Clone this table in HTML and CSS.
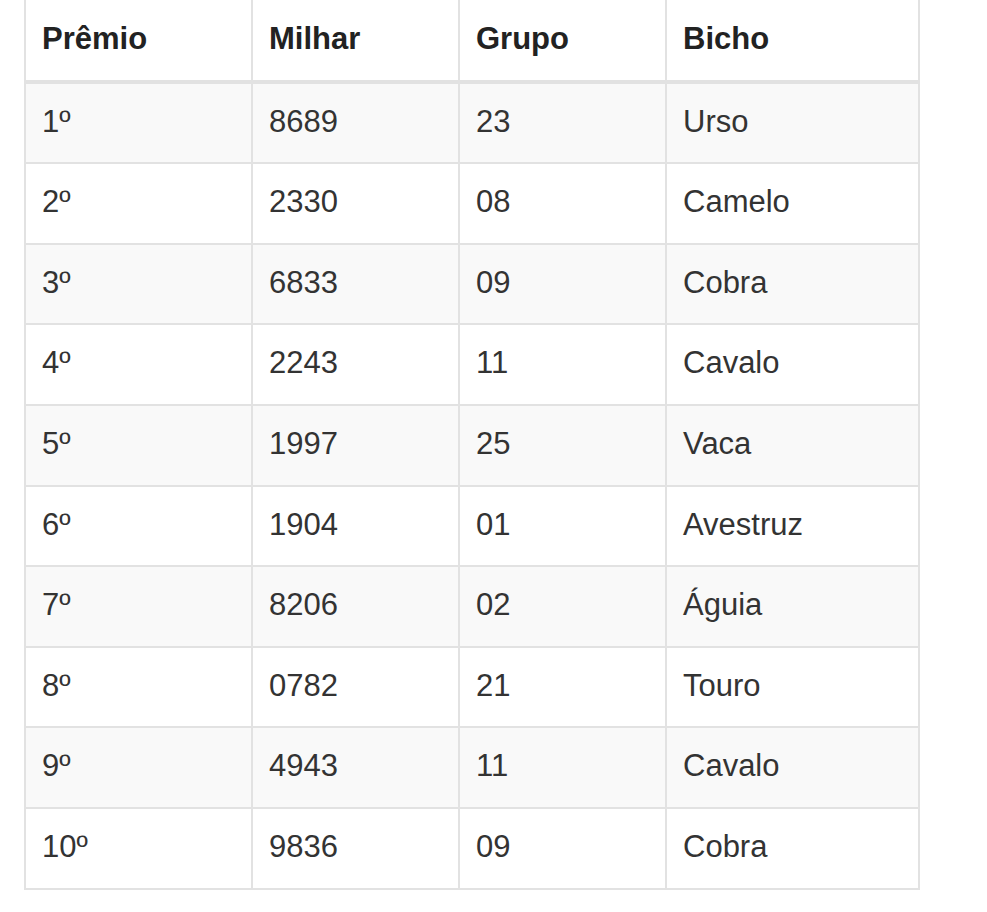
FILE: index.html
```html
<!DOCTYPE html>
<html lang="pt">
<head>
<meta charset="utf-8">
<title>Resultado</title>
<link rel="stylesheet" href="styles.css">
</head>
<body>
<table class="results">
  <colgroup>
    <col class="c1"><col class="c2"><col class="c3"><col class="c4">
  </colgroup>
  <thead>
    <tr><th>Prêmio</th><th>Milhar</th><th>Grupo</th><th>Bicho</th></tr>
  </thead>
  <tbody>
    <tr><td>1º</td><td>8689</td><td>23</td><td>Urso</td></tr>
    <tr><td>2º</td><td>2330</td><td>08</td><td>Camelo</td></tr>
    <tr><td>3º</td><td>6833</td><td>09</td><td>Cobra</td></tr>
    <tr><td>4º</td><td>2243</td><td>11</td><td>Cavalo</td></tr>
    <tr><td>5º</td><td>1997</td><td>25</td><td>Vaca</td></tr>
    <tr><td>6º</td><td>1904</td><td>01</td><td>Avestruz</td></tr>
    <tr><td>7º</td><td>8206</td><td>02</td><td>Águia</td></tr>
    <tr><td>8º</td><td>0782</td><td>21</td><td>Touro</td></tr>
    <tr><td>9º</td><td>4943</td><td>11</td><td>Cavalo</td></tr>
    <tr><td>10º</td><td>9836</td><td>09</td><td>Cobra</td></tr>
  </tbody>
</table>
</body>
</html>
```
FILE: styles.css
```css
html, body {
  margin: 0;
  padding: 0;
  background: #ffffff;
}
body {
  font-family: "Liberation Sans", Arial, sans-serif;
  color: #333333;
}
.results {
  margin: -3px 0 0 24px;
  border-collapse: collapse;
  table-layout: fixed;
  width: 896px;
  font-size: 31px;
  line-height: 44.6px;
}
.c1 { width: 227px; }
.c2 { width: 207px; }
.c3 { width: 207px; }
.c4 { width: 253px; }
.results th,
.results td {
  border: 2px solid #e2e2e2;
  padding: 16px 16px 18px;
  text-align: left;
  vertical-align: top;
}
.results th {
  font-weight: bold;
  color: #222222;
  padding-top: 18px;
  border-bottom-width: 4px;
}
.results tbody tr:nth-child(odd) {
  background: #f9f9f9;
}
```
